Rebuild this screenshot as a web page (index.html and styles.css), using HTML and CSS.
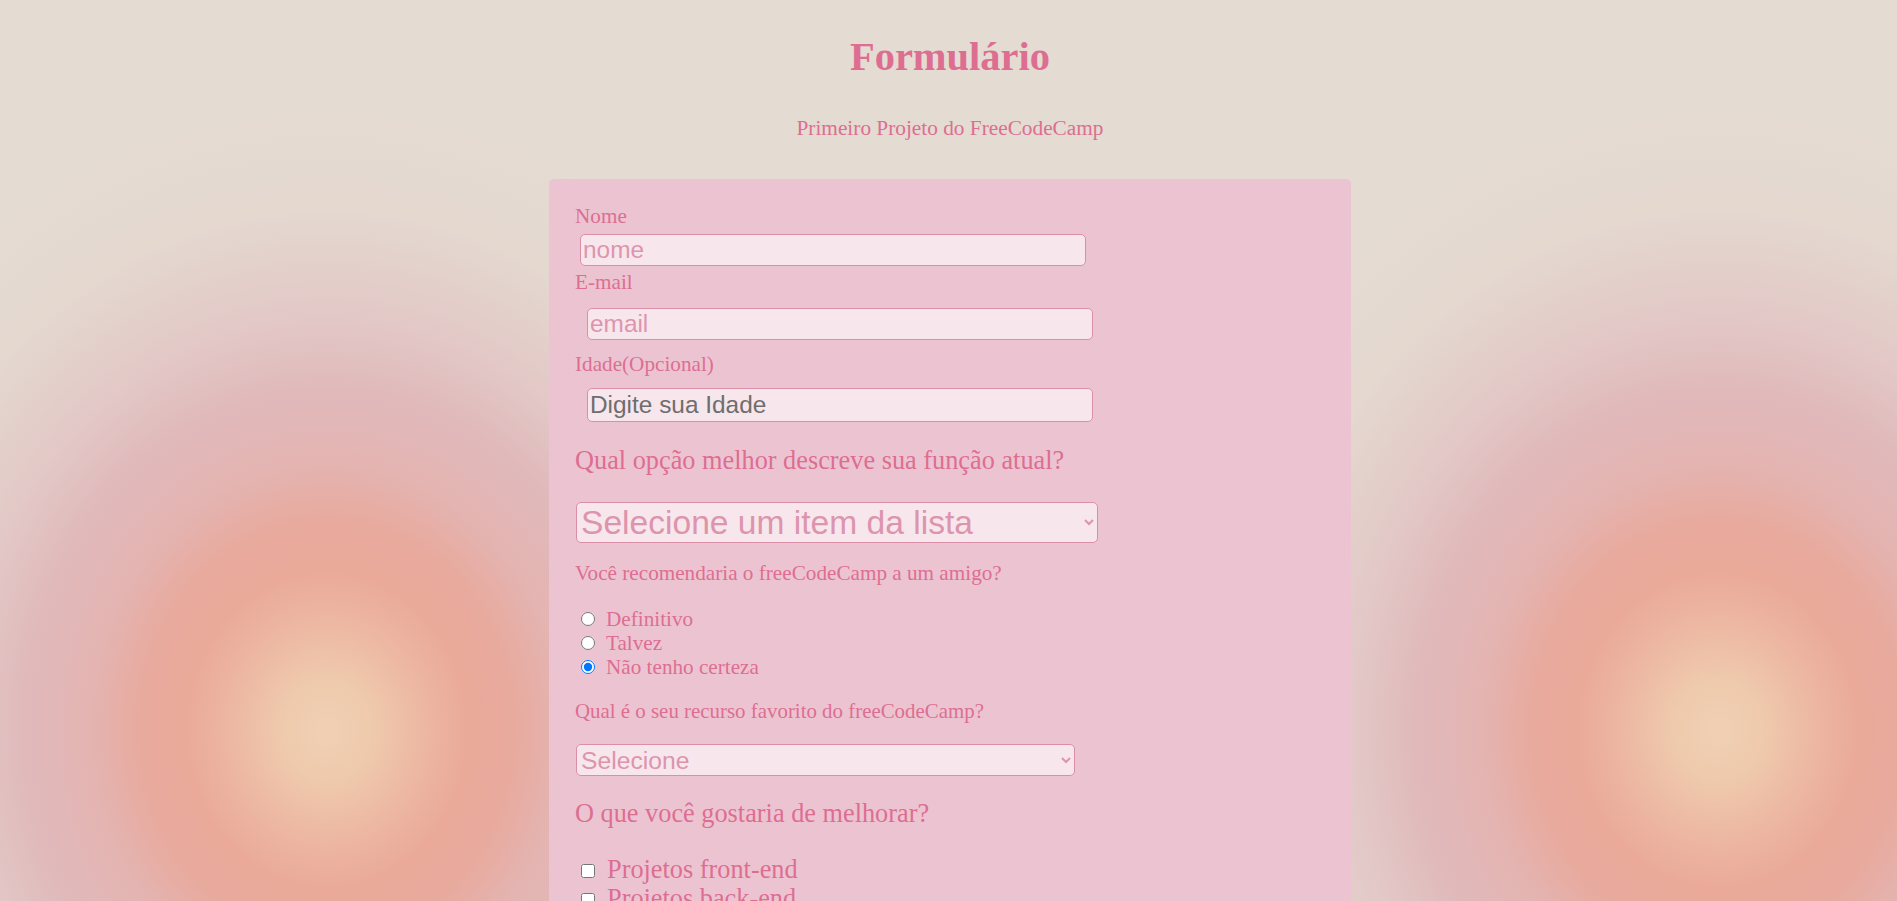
FILE: index.html
```html
<!DOCTYPE html>
<html lang="pt-BR">
<head>
<meta charset="utf-8">
<title>Formulário</title>
<link rel="stylesheet" href="styles.css">
</head>
<body>
<h1 class="title" id="title">Formulário</h1>
<p class="subtitle" id="description">Primeiro Projeto do FreeCodeCamp</p>
<form class="survey" id="survey-form">
  <label class="field-label" for="name">Nome</label>
  <input class="text-input name-input" id="name" type="text" placeholder="nome">
  <label class="field-label label-email" for="email">E-mail</label>
  <input class="text-input email-input" id="email" type="email" placeholder="email">
  <label class="field-label label-age" for="number">Idade(Opcional)</label>
  <input class="text-input age-input" id="number" type="number" placeholder="Digite sua Idade">
  <p class="question q-role">Qual opção melhor descreve sua função atual?</p>
  <select class="select select-role" id="dropdown">
    <option>Selecione um item da lista</option>
    <option>Estudante</option>
    <option>Trabalho em tempo integral</option>
    <option>Aprendiz em tempo integral</option>
    <option>Prefiro não dizer</option>
    <option>Outro</option>
  </select>
  <p class="question-small q-recommend">Você recomendaria o freeCodeCamp a um amigo?</p>
  <div class="radio-group">
    <label class="radio-row"><input class="radio" type="radio" name="rec"><span class="option-text">Definitivo</span></label>
    <label class="radio-row"><input class="radio" type="radio" name="rec"><span class="option-text">Talvez</span></label>
    <label class="radio-row"><input class="radio" type="radio" name="rec" checked><span class="option-text">Não tenho certeza</span></label>
  </div>
  <p class="question-small q-favorite">Qual é o seu recurso favorito do freeCodeCamp?</p>
  <select class="select select-favorite">
    <option>Selecione</option>
    <option>Desafios</option>
    <option>Projetos</option>
    <option>Comunidade</option>
    <option>Código aberto</option>
  </select>
  <p class="question q-improve">O que você gostaria de melhorar?</p>
  <div class="check-group">
    <label class="check-row"><input class="check" type="checkbox"><span class="check-text">Projetos front-end</span></label>
    <label class="check-row"><input class="check" type="checkbox"><span class="check-text">Projetos back-end</span></label>
    <label class="check-row"><input class="check" type="checkbox"><span class="check-text">Visualização de dados</span></label>
    <label class="check-row"><input class="check" type="checkbox"><span class="check-text">Desafios</span></label>
    <label class="check-row"><input class="check" type="checkbox"><span class="check-text">Comunidade open source</span></label>
    <label class="check-row"><input class="check" type="checkbox"><span class="check-text">Vídeos</span></label>
  </div>
  <p class="question q-comments">Quaisquer comentários ou sugestões?</p>
  <textarea class="comments" placeholder="Digite seu comentário aqui..."></textarea>
  <button class="submit" type="submit" id="submit">Enviar</button>
</form>
</body>
</html>
```
FILE: styles.css
```css
html {
  scrollbar-width: none;
  background-color: #e4dbd2;
  background-image:
    radial-gradient(ellipse 550px 620px at 327px 730px,
      #f0d0b3 0%, #efcaad 8%, #edbaa4 16%, #eaa999 26%, #e8aa9e 34%,
      #e4b4b1 43%, #e0b9bb 55%, rgba(226, 196, 196, 0.85) 66%,
      rgba(228, 213, 205, 0.5) 84%, rgba(228, 219, 210, 0) 100%),
    radial-gradient(ellipse 550px 620px at 1718px 730px,
      #f0d0b3 0%, #efcaad 8%, #edbaa4 16%, #eaa999 26%, #e8aa9e 34%,
      #e4b4b1 43%, #e0b9bb 55%, rgba(226, 196, 196, 0.85) 66%,
      rgba(228, 213, 205, 0.5) 84%, rgba(228, 219, 210, 0) 100%);
  background-repeat: no-repeat;
}

html::-webkit-scrollbar {
  display: none;
}

body {
  margin: 0;
  padding: 0 0 0 3px;
  font-family: "Liberation Serif", "Times New Roman", serif;
  color: #dd6e91;
}

.title {
  margin: 35px 0 0;
  font-size: 40.5px;
  line-height: 44px;
  font-weight: bold;
  text-align: center;
}

.subtitle {
  margin: 37px 0 0;
  font-size: 21.3px;
  line-height: 24px;
  text-align: center;
}

.survey {
  box-sizing: border-box;
  width: 802px;
  margin: 39px auto 0;
  padding: 25px 26px 40px;
  background: #ecc4d1;
  border-radius: 5px;
}

.field-label {
  display: block;
  font-size: 21.2px;
  line-height: 24px;
}

.label-email {
  margin-top: 4px;
}

.label-age {
  margin-top: 12px;
}

.text-input {
  display: block;
  box-sizing: border-box;
  width: 506px;
  height: 32px;
  padding: 1px 2px;
  font-family: "Liberation Sans", Arial, sans-serif;
  font-size: 24.4px;
  color: #444;
  background: #f7e6ec;
  border: 1px solid #db8ea8;
  border-radius: 5px;
  outline: none;
}

.text-input::placeholder {
  color: #dd95ae;
}

.name-input {
  margin: 6px 0 0 5px;
}

.email-input {
  margin: 14px 0 0 12px;
}

.age-input {
  margin: 12px 0 0 12px;
  height: 34px;
}

.age-input::placeholder {
  color: #6e6e6e;
}

.question {
  margin: 24px 0 0;
  font-size: 26.3px;
  line-height: 30px;
}

.q-improve {
  margin-top: 23px;
}

.q-comments {
  margin-top: 24px;
}

.question-small {
  margin: 18px 0 0;
  font-size: 21.2px;
  line-height: 24px;
}

.q-favorite {
  margin-top: 20px;
  font-size: 20.9px;
}

.select {
  display: block;
  box-sizing: border-box;
  font-family: "Liberation Sans", Arial, sans-serif;
  color: #dd94ad;
  background-color: #f7e6ec;
  border: 1px solid #db8ea8;
  border-radius: 5px;
  outline: none;
}

.select-role {
  margin: 26px 0 0 1px;
  width: 522px;
  height: 41px;
  font-size: 33.6px;
}

.select-favorite {
  margin: 21px 0 0 1px;
  width: 499px;
  height: 32px;
  font-size: 24.7px;
}

.radio-group {
  margin-top: 22px;
}

.radio-row {
  display: block;
  font-size: 21.2px;
  line-height: 24px;
}

.radio {
  width: 14px;
  height: 14px;
  margin: 0 3px 3px 6px;
}

.option-text {
  margin-left: 8px;
}

.check-group {
  margin-top: 26px;
}

.check-row {
  display: block;
  font-size: 26.3px;
  line-height: 29px;
}

.check {
  width: 14px;
  height: 14px;
  margin: 3px 3px 3px 6px;
}

.check-text {
  margin-left: 9px;
}

.comments {
  display: block;
  box-sizing: border-box;
  width: 506px;
  height: 120px;
  margin: 20px 0 0 1px;
  font-family: "Liberation Sans", Arial, sans-serif;
  font-size: 20px;
  background: #f7e6ec;
  border: 1px solid #db8ea8;
  border-radius: 5px;
}

.submit {
  display: block;
  margin: 24px 0 0 1px;
  padding: 8px 24px;
  font-family: "Liberation Serif", serif;
  font-size: 21px;
  color: #fff;
  background: #dd6e91;
  border: none;
  border-radius: 5px;
}
```
